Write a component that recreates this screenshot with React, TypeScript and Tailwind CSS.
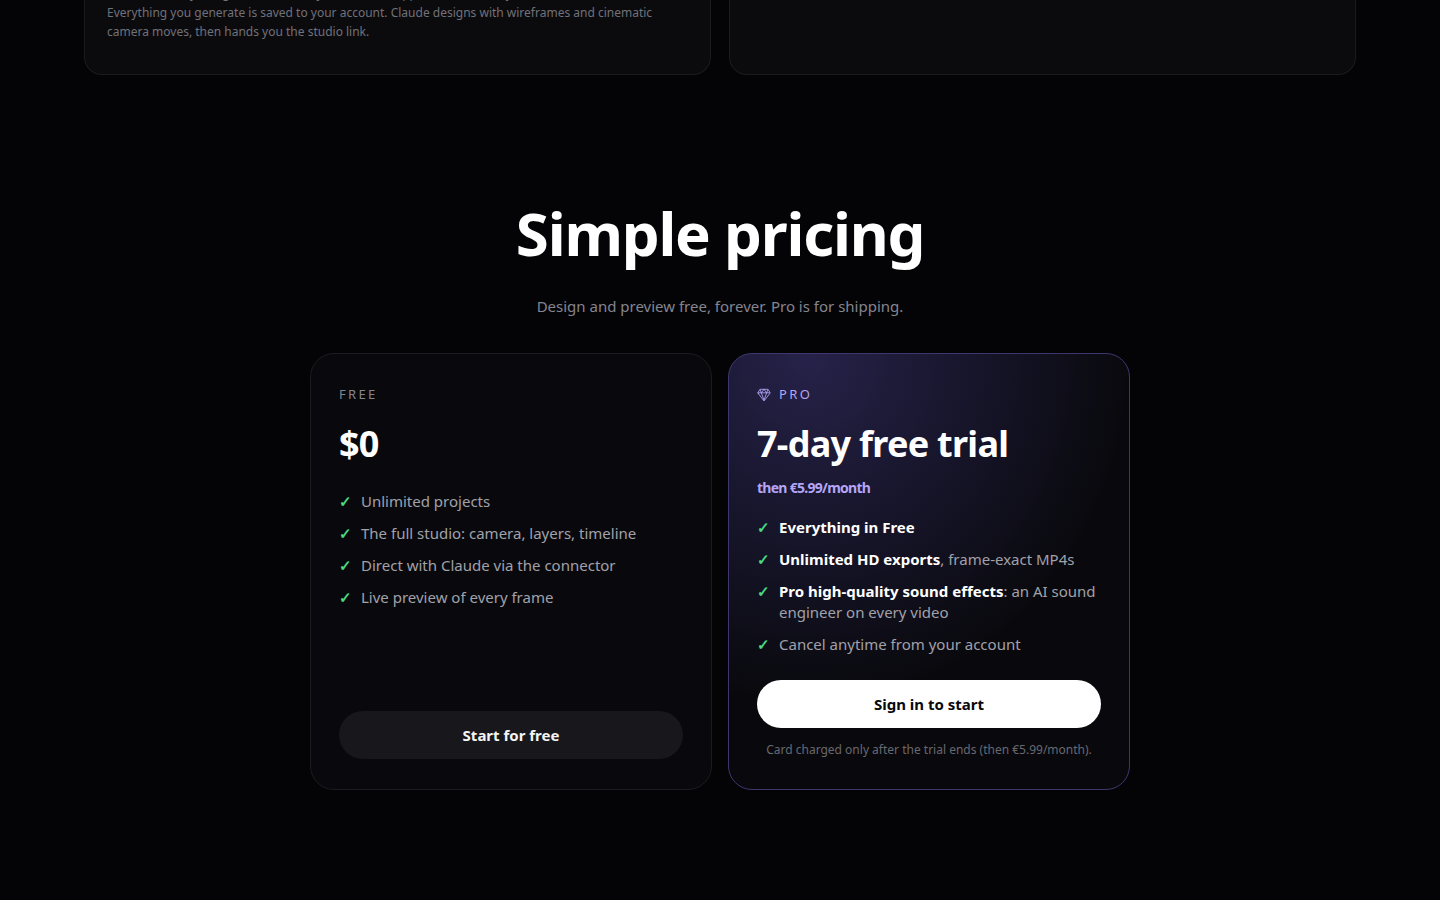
import { IoDiamondOutline } from "react-icons/io5";
import type { ReactNode } from "react";

const freeFeatures: ReactNode[] = [
  "Unlimited projects",
  "The full studio: camera, layers, timeline",
  "Direct with Claude via the connector",
  "Live preview of every frame",
];

const proFeatures: ReactNode[] = [
  <strong className="font-bold text-white">Everything in Free</strong>,
  <>
    <strong className="font-bold text-white">Unlimited HD exports</strong>, frame-exact MP4s
  </>,
  <>
    <strong className="font-bold text-white">Pro high-quality sound effects</strong>: an AI sound engineer on
    every video
  </>,
  "Cancel anytime from your account",
];

function FeatureList({ items }: { items: ReactNode[] }) {
  return (
    <ul className="flex flex-col gap-[11px] text-[15px] leading-[21px] text-[#a1a1aa]">
      {items.map((item, i) => (
        <li key={i} className="flex gap-2.5">
          <span className="w-3 shrink-0 font-bold text-[#4ad984]">✓</span>
          <span>{item}</span>
        </li>
      ))}
    </ul>
  );
}

export default function App() {
  return (
    <div className="min-h-screen overflow-hidden bg-[#040407] font-['Noto_Sans',sans-serif] text-white">
      <section className="mx-auto grid max-w-[1320px] grid-cols-2 gap-[18px] px-6">
        <div className="rounded-b-[18px] border border-t-0 border-[#1b1b1f] bg-[#0b0b0e] px-[22px] pb-[33px]">
          <p className="-mt-4 text-[12px] leading-[19px] text-[#71717a]">
            Claude can only design inside a library of the same app and it is one object.
            <br />
            Everything you generate is saved to your account. Claude designs with wireframes and cinematic camera
            moves, then hands you the studio link.
          </p>
        </div>
        <div className="rounded-b-[18px] border border-t-0 border-[#1b1b1f] bg-[#0b0b0e]" />
      </section>

      <section className="mx-auto max-w-[820px] pt-[126px]">
        <h2 className="text-center text-[60px] leading-[64px] font-bold tracking-[-0.02em]">Simple pricing</h2>
        <p className="mt-[29px] text-center text-[15px] leading-6 text-[#85858f]">
          Design and preview free, forever. Pro is for shipping.
        </p>

        <div className="mt-[35px] grid grid-cols-2 gap-4">
          <article className="flex flex-col rounded-3xl border border-[#1b1b20] bg-[#09090d] px-7 py-[30px]">
            <h3 className="text-[13px] leading-[21px] tracking-[0.18em] text-[#85858f]">FREE</h3>
            <p className="mt-3.5 mb-[22px] text-[36px] leading-[50px] font-bold tracking-[-0.02em]">$0</p>
            <FeatureList items={freeFeatures} />
            <button className="mt-auto h-12 rounded-full bg-[#18181c] text-[15px] font-bold text-[#f4f4f5]">
              Start for free
            </button>
          </article>

          <article className="flex flex-col rounded-3xl border border-[#40366f] bg-[#09090d] bg-[radial-gradient(120%_120%_at_20%_0%,rgba(124,108,255,0.25),transparent_67%)] px-7 py-[30px]">
            <h3 className="flex items-center gap-2 text-[13px] leading-[21px] tracking-[0.18em] text-[#b4a5f5]">
              <IoDiamondOutline className="size-3.5" aria-hidden />
              PRO
            </h3>
            <p className="mt-3.5 mb-[17px] text-[36px] leading-[50px] font-bold tracking-[-0.02em]">
              7-day free trial
              <small className="mt-[7px] block text-[14px] leading-6 text-[#b4a5f5]">then €5.99/month</small>
            </p>
            <FeatureList items={proFeatures} />
            <button className="mt-[25px] h-12 rounded-full bg-white text-[15px] font-bold text-[#09090b]">
              Sign in to start
            </button>
            <p className="mt-3 text-center text-[12px] leading-[19px] text-[#68686f]">
              Card charged only after the trial ends (then €5.99/month).
            </p>
          </article>
        </div>
      </section>
    </div>
  );
}
